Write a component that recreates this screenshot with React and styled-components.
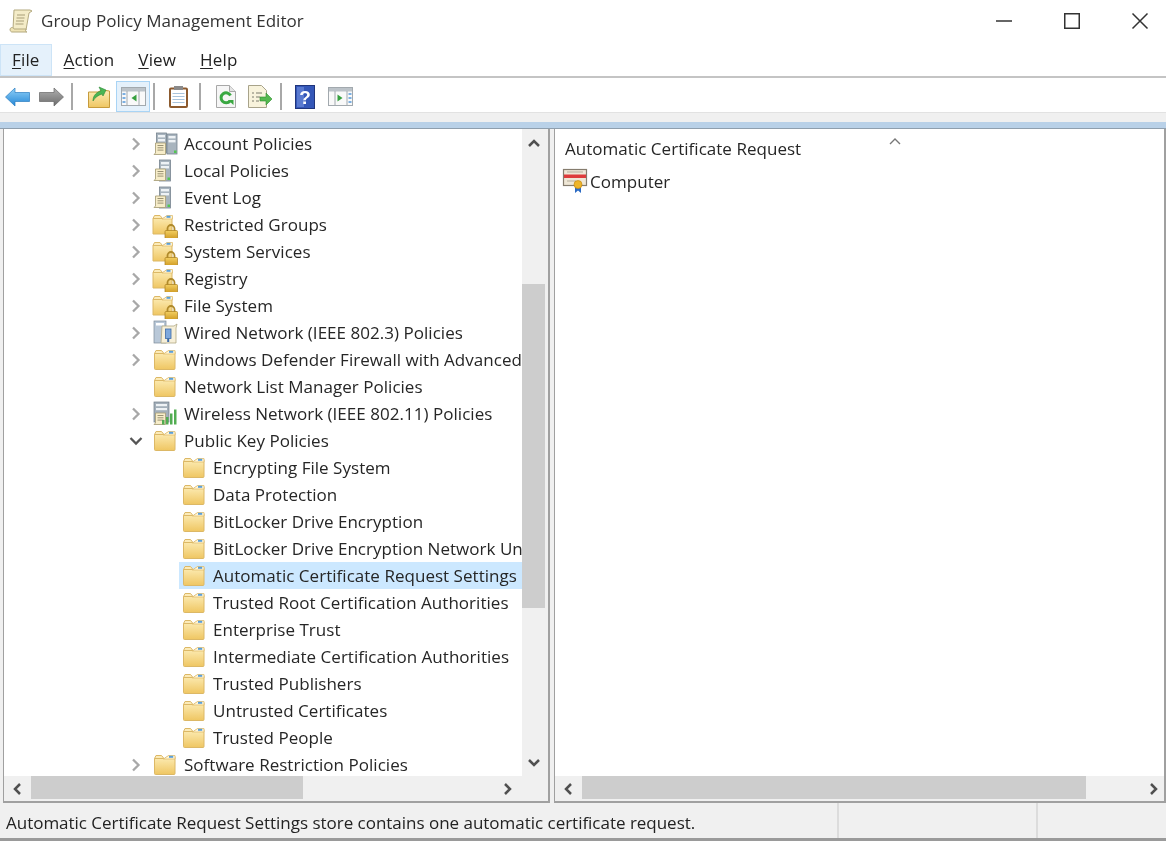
import React from "react";
import styled, { createGlobalStyle } from "styled-components";

const Global = createGlobalStyle`
  html, body { margin: 0; padding: 0; background: #fff; overflow: hidden; }
  * { box-sizing: border-box; }
  svg { overflow: visible; }
`;

const Window = styled.div`
  width: 1166px; height: 841px; display: flex; flex-direction: column; overflow: hidden;
  background: #f0f0f0; color: #222;
  font-family: "Open Sans", "Noto Sans", sans-serif; font-size: 17px; letter-spacing: 0.03px;
  filter: blur(0.45px);
`;
const TitleBar = styled.div`
  height: 42px; flex: none; display: flex; align-items: center; background: #fff; padding-left: 9px;
`;
const TitleText = styled.span`
  margin: -2px 0 0 8px; flex: 1; white-space: nowrap; color: #333;
`;
const WinControls = styled.div`display: flex; height: 42px; gap: 16px;`;
const WinBtn = styled.div`
  width: 52px; height: 42px; display: flex; align-items: center; justify-content: center;
`;
const MenuBar = styled.div`
  height: 36px; flex: none; display: flex; background: #fff; border-bottom: 2px solid #c4c4c4; padding-top: 2px;
`;
const MenuItem = styled.div`
  height: 32px; padding: 0 12px; display: flex; align-items: center; letter-spacing: 0.15px;
  ${p => p.$open && "background: #e5f1fb; border: 1px solid #cde4f7; padding: 0 11px;"}
  span { margin-top: -2px; }
  u { text-underline-offset: 2px; }
`;
const Toolbar = styled.div`
  height: 34px; flex: none; display: flex; align-items: center; background: #fff; padding-top: 3px;
`;
const ToolBtn = styled.div`
  width: ${p => p.$w || 34}px; height: 31px; display: flex; align-items: center; justify-content: center;
  margin-left: ${p => p.$ml || 0}px;
  ${p => p.$active && "background: #e5f1fb; border: 1px solid #a9d4f5;"}
`;
const ToolSep = styled.div`
  width: 2px; height: 27px; background: #a8a8a8; margin-left: ${p => p.$ml}px;
`;
const Strip = styled.div`height: 10px; flex: none; background: #f0f0f0; border-top: 1px solid #e2e2e2;`;
const BlueStrip = styled.div`height: 7px; flex: none; background: #b9d1e8; border-bottom: 1px solid #8f9fae;`;
const Panes = styled.div`
  flex: 1; min-height: 0; display: flex; background: #f0f0f0; padding-left: 3px;
`;
const Pane = styled.div`
  display: flex; flex-direction: column; min-height: 0;
  border-left: 1px solid #a0a0a0; border-right: 2px solid #a0a0a0; border-bottom: 2px solid #a0a0a0;
  width: ${p => p.$w}px; margin-right: ${p => p.$mr || 0}px; background: #fff;
`;
const PaneBody = styled.div`flex: 1; min-height: 0; display: flex;`;
const Tree = styled.div`
  flex: 1; min-width: 0; overflow: hidden; padding-top: 1px; background: #fff;
`;
const Row = styled.div`
  height: 27px; display: flex; align-items: center; white-space: nowrap; overflow: hidden;
  margin-left: ${p => (p.$level === 2 ? 175 : 123)}px;
  padding-left: ${p => (p.$level === 2 ? 4 : 0)}px;
  ${p => p.$selected && "background: #cce8ff;"}
`;
const Chevron = styled.div`
  width: 18px; height: 27px; margin-right: 9px; flex: none; display: flex; align-items: center; justify-content: center;
`;
const RowIcon = styled.div`width: 24px; height: 24px; flex: none; display: flex; align-items: center;`;
const RowText = styled.span`margin-left: 6px; color: #262626;`;
const VScroll = styled.div`width: 26px; flex: none; display: flex; flex-direction: column; background: #f0f0f0;`;
const VArrow = styled.div`
  height: ${p => p.$h}px; flex: none; display: flex; align-items: center; justify-content: center; padding-right: 2px;
`;
const VTrack = styled.div`flex: 1; min-height: 0; padding-top: ${p => p.$top}px;`;
const VThumb = styled.div`width: 23px; height: ${p => p.$h}px; background: #cdcdcd;`;
const HScroll = styled.div`
  height: 25px; flex: none; display: flex; align-items: stretch; background: #f0f0f0; padding-right: ${p => p.$pr || 0}px;
`;
const HArrow = styled.div`
  width: ${p => p.$w}px; flex: none; display: flex; align-items: center; justify-content: center; padding-left: ${p => p.$pl || 0}px;
`;
const HTrack = styled.div`flex: 1; min-width: 0; display: flex; padding-bottom: 2px;`;
const HThumb = styled.div`width: ${p => p.$w}px; background: #cdcdcd;`;
const ListArea = styled.div`flex: 1; min-height: 0; background: #fff; position: relative;`;
const SortCaret = styled.div`position: absolute; left: 333px; top: 0;`;
const ListHeader = styled.div`height: 37px; padding: 1px 0 0 10px; display: flex; align-items: center; white-space: nowrap; color: #262626;`;
const ListRow = styled.div`height: 30px; padding-left: 8px; display: flex; align-items: center; color: #262626;`;
const ListLabel = styled.span`margin-left: 2px;`;
const StatusBar = styled.div`
  height: 38px; flex: none; display: flex; background: #f0f0f0; border-bottom: 3px solid #9a9a9a; letter-spacing: -0.02px;
`;
const StatusCell = styled.div`
  height: 35px; display: flex; align-items: center; white-space: nowrap; padding: 4px 0 0 6px; color: #222;
  ${p => p.$w ? `width: ${p.$w}px; flex: none; border-left: 2px solid #dcdcdc;` : "flex: 1;"}
`;

const Fold = () => (
  <>
    <path d="M.5 5.500V20.500a1 1 0 0 0 1 1H20a1 1 0 0 0 1-1V3.500L14.500 3 10.500 5.500Z" fill="url(#fg)" stroke="#dcb866" strokeWidth="1" />
    <path d="M.5 5.500 2 2.500h5.500l2.500 3Z" fill="#fcebb8" stroke="#dcb866" strokeWidth="1" />
    <path d="M9.500 6l5-3.500h6.500v3.500Z" fill="#fff5d6" stroke="#dcb866" strokeWidth=".7" />
    <rect x="15" y="2.800" width="4.200" height="2" fill="#5a9fd9" />
  </>
);
const Defs = () => (
  <svg width="0" height="0" style={{ position: "absolute" }}>
    <defs>
      <linearGradient id="fg" x1="0" y1="0" x2="0" y2="1">
        <stop offset="0" stopColor="#fdeeb9" />
        <stop offset="1" stopColor="#efc662" />
      </linearGradient>
      <linearGradient id="lg" x1="0" y1="0" x2="0" y2="1">
        <stop offset="0" stopColor="#f3cf62" />
        <stop offset="1" stopColor="#cf9a22" />
      </linearGradient>
      <linearGradient id="blue" x1="0" y1="0" x2="0" y2="1">
        <stop offset="0" stopColor="#8fd0f8" />
        <stop offset="1" stopColor="#2587d6" />
      </linearGradient>
      <linearGradient id="gray" x1="0" y1="0" x2="0" y2="1">
        <stop offset="0" stopColor="#b0b0b0" />
        <stop offset="1" stopColor="#6c6c6c" />
      </linearGradient>
    </defs>
  </svg>
);
const I = ({ children, w = 24, h = 24 }) => <svg width={w} height={h} viewBox={`0 0 ${w} ${h}`}>{children}</svg>;
const Folder = () => <I><Fold /></I>;
const FolderLock = () => (
  <I>
    <g transform="translate(-1 0)"><path d="M0 5.500V21h19V3.500L14 3 10 5.500Z" fill="url(#fg)" stroke="#dcb866" /><path d="M0 5.500 1.500 2.500h5.500l2.500 3Z" fill="#fcebb8" stroke="#dcb866" /><path d="M9 6l5-3.500h5.500v3.500Z" fill="#fff5d6" stroke="#dcb866" strokeWidth=".7" /><rect x="13.500" y="2.800" width="4" height="2" fill="#5a9fd9" /></g>
    <path d="M13.500 18v-2.500a3.500 3.500 0 0 1 7 0V18" fill="none" stroke="#b08a2a" strokeWidth="1.8" />
    <rect x="11" y="17.500" width="12.500" height="8.500" rx="1" fill="url(#lg)" stroke="#a87c1c" strokeWidth=".7" />
  </I>
);
const Tower = ({ x, y = 1, w = 11, h = 21 }) => (
  <>
    <rect x={x} y={y} width={w} height={h} fill="#a8b4be" stroke="#76838e" strokeWidth=".8" />
    <rect x={x + 1.500} y={y + 2} width={w - 3} height="2.400" fill="#eef2f5" />
    <rect x={x + 1.500} y={y + 6} width={w - 3} height="2.400" fill="#eef2f5" />
    <rect x={x + w - 3} y={y + h - 3.500} width="2.500" height="2.500" fill="#53c653" />
  </>
);
const Scroll = ({ x = 1, y = 10 }) => (
  <g transform={`translate(${x} ${y})`}>
    <path d="M1.500 0h10v11.500H0L1.500 10Z" fill="#f7edc9" stroke="#aaa17c" strokeWidth=".9" />
    <path d="M3.500 2.500h6M3.500 4.800h6M3.500 7.100h6" stroke="#999274" strokeWidth="1" />
  </g>
);
const ServerDoc = () => <I><Tower x={5.500} /><Scroll x={0} y={10} /></I>;
const TwoServers = () => <I><Tower x={2.500} y={1} w={10} h={20} /><Tower x={13} y={2} w={10} h={20} /><Scroll x={0} y={11} /></I>;
const Wired = () => (
  <I>
    <rect x="0" y="0" width="12" height="22" fill="#b9c8d8" stroke="#7c8a98" strokeWidth=".7" />
    <rect x="2" y="2" width="8" height="2.500" fill="#fff" />
    <path d="M8 5h12l3-2-1 4v15H7Z" fill="#f6efd8" stroke="#b0a783" strokeWidth=".8" />
    <rect x="11.500" y="8" width="5.500" height="9.500" fill="#7ea8dc" stroke="#3c6aa8" strokeWidth=".8" />
    <rect x="13.200" y="17.500" width="2" height="3.500" fill="#3c6aa8" />
  </I>
);
const Wireless = () => (
  <I>
    <rect x="0" y="0" width="15" height="20" fill="#a3afba" stroke="#6f7c88" strokeWidth=".7" />
    <rect x="2" y="2" width="11" height="2.200" fill="#eef2f5" />
    <rect x="2" y="6" width="11" height="2.200" fill="#eef2f5" />
    <Scroll x={0} y={11} />
    <path d="M8 22.500V18h2.500v4.500ZM12 22.500V15h2.500v7.500ZM16 22.500V11.500h2.500v11ZM20 22.500V7.500h2.500v15Z" fill="#52ad52" />
  </I>
);
const Cert = () => (
  <I w={25} h={25}>
    <rect x=".5" y=".5" width="23" height="16" fill="#efe7d6" stroke="#857c6e" strokeWidth="1.200" />
    <rect x="1" y="5.500" width="22" height="3.500" fill="#de3c3c" />
    <path d="M4 3h16M4 12h9" stroke="#b5ad9c" />
    <path d="M12 17v7l3-2.500 3 2.500v-7Z" fill="#2c6bc4" />
    <circle cx="15" cy="15.500" r="4" fill="#eeb52a" stroke="#c58a12" strokeWidth=".7" />
  </I>
);

const Chev = ({ open }) => open ? (
  <svg width="14" height="10" viewBox="0 0 14 10"><path d="M1.500 2 7 7.500 12.500 2" fill="none" stroke="#555" strokeWidth="2.300" /></svg>
) : (
  <svg width="10" height="14" viewBox="0 0 10 14"><path d="M2 1.500 7.500 7 2 12.500" fill="none" stroke="#a8a8a8" strokeWidth="2.300" /></svg>
);
const Arrow = ({ dir }) => {
  const d = { up: "M2 9 7 4l5 5", down: "M2 4l5 5 5-5", left: "M9 2 4 7l5 5", right: "M4 2l5 5-5 5" }[dir];
  return <svg width="14" height="14" viewBox="0 0 14 14"><path d={d} fill="none" stroke="#505050" strokeWidth="2.500" /></svg>;
};

const ScrollIcon = () => (
  <svg width="24" height="24" viewBox="0 0 24 24">
    <path d="M5 1h16l2 1-3 2-3 17H3l1-1Z" fill="#f4ecc8" stroke="#b3a97f" />
    <path d="M1 20c1-2 3-2 4 0h12c-1 2 0 3 1 3H3c-1 0-2-1-2-3Z" fill="#efe3b5" stroke="#b3a97f" />
    <path d="M8 6h8M7.500 9h8M7 12h8M6.500 15h8" stroke="#a89e78" />
  </svg>
);
const BackIcon = () => (
  <svg width="25" height="20" viewBox="0 0 25 20"><path d="M.5 10 10 1v4.500h14.500v9H10V19Z" fill="url(#blue)" stroke="#2a7cc0" strokeWidth=".7" strokeLinejoin="round" /></svg>
);
const FwdIcon = () => (
  <svg width="25" height="20" viewBox="0 0 25 20"><path d="M24.500 10 15 1v4.500H.5v9H15V19Z" fill="url(#gray)" stroke="#666" strokeWidth=".7" strokeLinejoin="round" /></svg>
);
const UpIcon = () => (
  <svg width="22" height="23" viewBox="0 0 22 23">
    <path d="M.5 7v15.500h21V6L14 5 10 7Z" fill="url(#fg)" stroke="#c69b3c" />
    <path d="M5 16c0-6 4-9 8-10l-2-4 7 3-3 6-1-2c-3 1-7 3-9 7Z" fill="#4ab654" stroke="#2a8a34" strokeWidth=".6" />
  </svg>
);
const PaneIcon = ({ flip }) => (
  <svg width="25" height="19" viewBox="0 0 25 19">
    <rect x=".5" y=".5" width="24" height="18" fill="#f9f9f9" stroke="#a2a9ae" />
    <rect x="1" y="1" width="23" height="3.500" fill="#bcc3c9" />
    <path d={flip ? "M7 4v14M19 4v14" : "M6 4v14M18 4v14"} stroke="#a2a9ae" />
    {flip
      ? <><path d="M9.500 7.500l5 3.500-5 3.500Z" fill="#37a03f" /><path d="M20.500 7h3M20.500 11h3M20.500 15h3" stroke="#7cb0e2" strokeWidth="2" /></>
      : <><path d="M15.500 7.500l-5 3.500 5 3.500Z" fill="#37a03f" /><path d="M1.500 7h3M1.500 11h3M1.500 15h3" stroke="#7cb0e2" strokeWidth="2" /></>}
  </svg>
);
const ClipIcon = () => (
  <svg width="19" height="22" viewBox="0 0 19 22">
    <rect x="1" y="2.500" width="17" height="18.500" rx="1" fill="#fff" stroke="#8c5a2e" strokeWidth="2" />
    <rect x="5" y="0" width="9" height="4" fill="#8a8a8a" />
    <path d="M3.500 7.500h12M3.500 10.500h12M3.500 13.500h12M3.500 16.500h12" stroke="#a9c4dc" />
  </svg>
);
const RefreshIcon = () => (
  <svg width="20" height="23" viewBox="0 0 20 23">
    <path d="M.5.5h13l6 6v16H.500Z" fill="#f6f6f6" stroke="#a8a8a8" />
    <path d="M13.500.5v6h6" fill="#e4e4e4" stroke="#a8a8a8" />
    <path d="M14 16a5 5 0 1 1 .5-5.500" fill="none" stroke="#3aa842" strokeWidth="3" />
    <path d="M12 15h5.500v5Z" fill="#3aa842" />
  </svg>
);
const ExportIcon = () => (
  <svg width="25" height="23" viewBox="0 0 25 23">
    <path d="M.5.500h13l5 5v17H.500Z" fill="#f8f3dc" stroke="#a8a38a" />
    <path d="M4 8h2M4 12h2M4 16h2M8 8h6M8 12h4M8 16h3" stroke="#7a7a6c" />
    <path d="M12 12h6V8l6 6-6 6v-4h-6Z" fill="#55b84f" stroke="#2f8f2f" strokeWidth=".6" />
  </svg>
);
const HelpIcon = () => (
  <svg width="20" height="24" viewBox="0 0 20 24">
    <rect x=".5" y=".5" width="19" height="23" fill="#3457b8" stroke="#20357c" />
    <rect x="2" y="2" width="7" height="20" fill="#5a7ad0" />
    <text x="10" y="19" textAnchor="middle" fontSize="19" fontWeight="700" fontFamily="Liberation Sans" fill="#fff">?</text>
  </svg>
);

const level1 = [
  ["Account Policies", TwoServers], ["Local Policies", ServerDoc], ["Event Log", ServerDoc],
  ["Restricted Groups", FolderLock], ["System Services", FolderLock], ["Registry", FolderLock], ["File System", FolderLock],
  ["Wired Network (IEEE 802.3) Policies", Wired], ["Windows Defender Firewall with Advanced Security", Folder],
  ["Network List Manager Policies", Folder, "none"], ["Wireless Network (IEEE 802.11) Policies", Wireless],
  ["Public Key Policies", Folder, "open"],
];
const level2 = [
  "Encrypting File System", "Data Protection", "BitLocker Drive Encryption", "BitLocker Drive Encryption Network Unlock Certificate",
  "Automatic Certificate Request Settings", "Trusted Root Certification Authorities", "Enterprise Trust",
  "Intermediate Certification Authorities", "Trusted Publishers", "Untrusted Certificates", "Trusted People",
];

const L1Row = ({ label, icon: Icon, mode }) => (
  <Row $level={1}>
    <Chevron>{mode !== "none" && <Chev open={mode === "open"} />}</Chevron>
    <RowIcon><Icon /></RowIcon>
    <RowText>{label}</RowText>
  </Row>
);

export default function App() {
  return (
    <>
      <Global />
      <Defs />
      <Window>
        <TitleBar>
          <ScrollIcon />
          <TitleText>Group Policy Management Editor</TitleText>
          <WinControls>
            <WinBtn><svg width="16" height="16" viewBox="0 0 16 16"><path d="M0 8h16" stroke="#333" strokeWidth="1.5" /></svg></WinBtn>
            <WinBtn><svg width="16" height="16" viewBox="0 0 16 16"><rect x=".75" y=".75" width="14.500" height="14.500" fill="none" stroke="#333" strokeWidth="1.5" /></svg></WinBtn>
            <WinBtn><svg width="16" height="16" viewBox="0 0 16 16"><path d="M.5.5l15 15M15.500.5l-15 15" stroke="#333" strokeWidth="1.500" /></svg></WinBtn>
          </WinControls>
        </TitleBar>
        <MenuBar>
          <MenuItem $open><span><u>F</u>ile</span></MenuItem>
          <MenuItem><span><u>A</u>ction</span></MenuItem>
          <MenuItem><span><u>V</u>iew</span></MenuItem>
          <MenuItem><span><u>H</u>elp</span></MenuItem>
        </MenuBar>
        <Toolbar>
          <ToolBtn><BackIcon /></ToolBtn>
          <ToolBtn><FwdIcon /></ToolBtn>
          <ToolSep $ml={3} />
          <ToolBtn $ml={8} $w={35}><UpIcon /></ToolBtn>
          <ToolBtn $active><PaneIcon /></ToolBtn>
          <ToolSep $ml={3} />
          <ToolBtn $ml={6}><ClipIcon /></ToolBtn>
          <ToolSep $ml={4} />
          <ToolBtn $ml={8}><RefreshIcon /></ToolBtn>
          <ToolBtn><ExportIcon /></ToolBtn>
          <ToolSep $ml={3} />
          <ToolBtn $ml={6}><HelpIcon /></ToolBtn>
          <ToolBtn $ml={1}><PaneIcon flip /></ToolBtn>
        </Toolbar>
        <Strip />
        <BlueStrip />
        <Panes>
          <Pane $w={547} $mr={4}>
            <PaneBody>
              <Tree>
                {level1.map(([label, icon, mode]) => <L1Row key={label} label={label} icon={icon} mode={mode} />)}
                {level2.map(l => (
                  <Row key={l} $level={2} $selected={l.startsWith("Automatic")}>
                    <RowIcon><Folder /></RowIcon>
                    <RowText>{l}</RowText>
                  </Row>
                ))}
                <L1Row label="Software Restriction Policies" icon={Folder} />
              </Tree>
              <VScroll>
                <VArrow $h={29}><Arrow dir="up" /></VArrow>
                <VTrack $top={126}><VThumb $h={324} /></VTrack>
                <VArrow $h={26}><Arrow dir="down" /></VArrow>
              </VScroll>
            </PaneBody>
            <HScroll $pr={27}>
              <HArrow $w={27} $pl={1}><Arrow dir="left" /></HArrow>
              <HTrack><HThumb $w={272} /></HTrack>
              <HArrow $w={26}><Arrow dir="right" /></HArrow>
            </HScroll>
          </Pane>
          <Pane $w={612}>
            <ListArea>
              <SortCaret><svg width="14" height="10" viewBox="0 0 14 10"><path d="M2 7 7 2l5 5" fill="none" stroke="#777" strokeWidth="1.4" /></svg></SortCaret>
              <ListHeader>Automatic Certificate Request</ListHeader>
              <ListRow><Cert /><ListLabel>Computer</ListLabel></ListRow>
            </ListArea>
            <HScroll>
              <HArrow $w={27} $pl={1}><Arrow dir="left" /></HArrow>
              <HTrack><HThumb $w={504} /></HTrack>
              <HArrow $w={20}><Arrow dir="right" /></HArrow>
            </HScroll>
          </Pane>
        </Panes>
        <StatusBar>
          <StatusCell>Automatic Certificate Request Settings store contains one automatic certificate request.</StatusCell>
          <StatusCell $w={199} />
          <StatusCell $w={130} />
        </StatusBar>
      </Window>
    </>
  );
}
